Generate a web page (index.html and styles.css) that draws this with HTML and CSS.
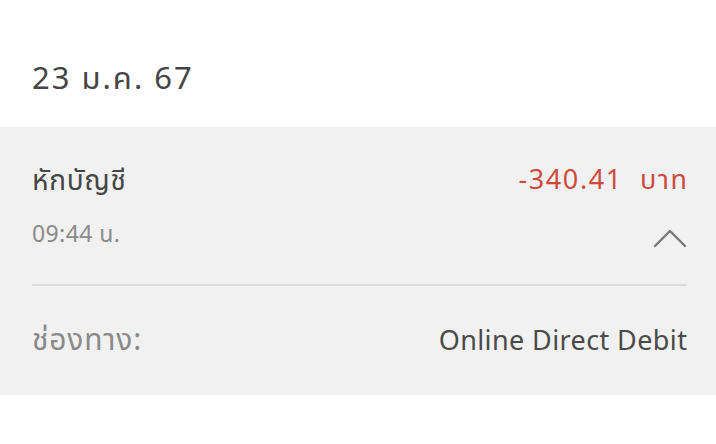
FILE: index.html
```html
<!DOCTYPE html>
<html lang="th">
<head>
  <meta charset="UTF-8" />
  <meta name="viewport" content="width=device-width, initial-scale=1.0"/>
  <title>รายการ</title>
  <link rel="stylesheet" href="styles.css">
</head>
<body>
  <div class="date-head">23 ม.ค. 67</div>

  <div class="txn">
    <div class="txn-top">
      <div class="txn-left">
        <div class="txn-title">หักบัญชี</div>
        <div class="txn-time">09:44 น.</div>
      </div>
      <div class="txn-right">
        <div class="txn-amount">-340.41&nbsp; บาท</div>
        <svg class="chevron" width="34" height="19" viewBox="0 0 34 19">
          <polyline points="2,17 17,2 32,17" fill="none" stroke="#777" stroke-width="2.4" stroke-linecap="round" stroke-linejoin="round"/>
        </svg>
      </div>
    </div>
    <div class="txn-row">
      <span class="row-label">ช่องทาง:</span>
      <span class="row-value">Online Direct Debit</span>
    </div>
  </div>
</body>
</html>
```

FILE: styles.css
```css
body {
  margin: 0;
  font-family: "Noto Sans", "Noto Sans Thai", sans-serif;
  background-color: #fff;
  color: #444;
}

.date-head {
  height: 127px;
  box-sizing: border-box;
  padding: 57px 32px 0;
  font-size: 31px;
  line-height: 40px;
  letter-spacing: 2px;
  color: #454545;
}

.txn {
  background-color: #f1f1f1;
  padding: 0 29px 0 32px;
  height: 268px;
  box-sizing: border-box;
}

.txn-top {
  display: flex;
  justify-content: space-between;
  padding-top: 34px;
  height: 159px;
  box-sizing: border-box;
  border-bottom: 2px solid #dcdcdc;
}

.txn-title {
  font-size: 28px;
  line-height: 36px;
  letter-spacing: 0.7px;
  color: #454545;
}

.txn-time {
  font-size: 23px;
  line-height: 30px;
  letter-spacing: 0.4px;
  color: #8a8a8a;
  margin-top: 21px;
}

.txn-right {
  display: flex;
  flex-direction: column;
  align-items: flex-end;
}

.txn-amount {
  font-size: 27px;
  line-height: 36px;
  letter-spacing: 1.6px;
  color: #cf4a3c;
  margin-right: -1.6px;
}

.chevron {
  margin-top: 32px;
  margin-right: 0;
}

.txn-row {
  display: flex;
  justify-content: space-between;
  align-items: baseline;
  padding-top: 35px;
  line-height: 36px;
}

.row-label {
  font-size: 30px;
  letter-spacing: 0.8px;
  color: #8a8a8a;
}

.row-value {
  font-size: 27px;
  letter-spacing: 0.4px;
  color: #4a4a4a;
  margin-right: -0.4px;
}
```
